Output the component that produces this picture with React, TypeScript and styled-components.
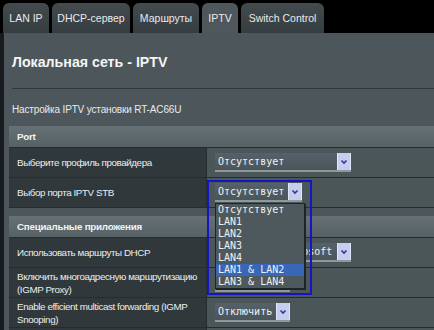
import { FC, ReactNode } from 'react'
import styled, { createGlobalStyle } from 'styled-components'

const GlobalStyle = createGlobalStyle`
  html, body {
    margin: 0;
    padding: 0;
    background: #000;
  }
  body {
    font-family: "Liberation Sans", Arial, sans-serif;
  }
`

const Page = styled.div`
  width: 434px;
  height: 330px;
  overflow: hidden;
  background: #000;
`

const TabBar = styled.div`
  display: flex;
  align-items: flex-end;
  gap: 3px;
  height: 33px;
  padding-left: 3px;
`

const Tab = styled.div<{ $active?: boolean; $w: number }>`
  width: ${(p) => p.$w}px;
  height: 30px;
  box-sizing: border-box;
  display: flex;
  align-items: center;
  justify-content: center;
  border-radius: 6px 6px 0 0;
  background: ${(p) => (p.$active ? '#4e585c' : 'linear-gradient(#434b4e, #363d40)')};
  color: #e8eaeb;
  font-size: 10.5px;
  white-space: nowrap;
`

const Body = styled.div`
  display: flex;
  height: 297px;
`

const EdgeStrip = styled.div`
  width: 4px;
  background: #171b1d;
  flex-shrink: 0;
`

const Panel = styled.div`
  flex: 1;
  background: #4d575b;
  padding: 20px 0 0 5px;
`

const Title = styled.h1`
  margin: 0 0 0 3px;
  height: 18px;
  line-height: 18px;
  font-size: 14.2px;
  font-weight: bold;
  color: #f4f5f5;
`

const Divider = styled.hr`
  margin: 17px 0 0 3px;
  border: none;
  border-top: 1px solid #30383b;
  height: 0;
`

const Subtitle = styled.div`
  margin: 14px 0 0 3px;
  line-height: 14px;
  font-size: 10px;
  letter-spacing: -0.15px;
  color: #e8eaeb;
`

const Table = styled.div<{ $top: number }>`
  margin-top: ${(p) => p.$top}px;
  display: flex;
  flex-direction: column;
`

const HeaderRow = styled.div`
  height: 21px;
  border-bottom: 1px solid #262d30;
  background: linear-gradient(#667175, #566165);
  display: flex;
  align-items: center;
  padding-left: 8px;
  font-size: 9.8px;
  letter-spacing: -0.25px;
  font-weight: bold;
  color: #f2f3f3;
`

const Row = styled.div`
  display: flex;
  height: 29px;
  border-bottom: 1px solid #262d30;
`

const LabelCell = styled.div`
  width: 198px;
  flex-shrink: 0;
  box-sizing: border-box;
  background: #30383b;
  border-right: 1px solid #262d30;
  padding-left: 8px;
  display: flex;
  align-items: center;
  font-size: 9.8px;
  letter-spacing: -0.4px;
  line-height: 13px;
  color: #eceeef;
  white-space: nowrap;
`

const ValueCell = styled.div`
  position: relative;
  flex: 1;
  background: #4b5659;
  display: flex;
  align-items: center;
  padding-left: 8px;
`

const SelectBox = styled.div<{ $w: number }>`
  width: ${(p) => p.$w}px;
  height: 19px;
  box-sizing: border-box;
  display: flex;
  align-items: center;
  background: linear-gradient(#55616a, #4b565a);
  border-bottom: 2px solid #8e999d;
  padding-left: 3px;
  font-family: "DejaVu Sans Mono", "Liberation Mono", monospace;
  font-size: 10px;
  color: #eef1f2;
  white-space: nowrap;
  overflow: hidden;
`

const ArrowBox = styled.div`
  margin-left: auto;
  width: 14px;
  height: 19px;
  flex-shrink: 0;
  box-sizing: border-box;
  background: #c6cef0;
  border: 1px solid #e2e6fa;
  display: flex;
  align-items: center;
  justify-content: center;
`

const SelectText = styled.span`
  overflow: hidden;
`

const FocusRing = styled.div`
  position: absolute;
  left: 0;
  top: 2px;
  width: 105px;
  height: 115px;
  box-sizing: border-box;
  border: 2px solid #1414c8;
  z-index: 2;
  pointer-events: none;
`

const Dropdown = styled.ul`
  position: absolute;
  left: 8px;
  top: 25px;
  width: 88px;
  margin: 0;
  padding: 0;
  list-style: none;
  background: #4e595d;
  border: 1px solid #1f2527;
  box-shadow: 1px 1px 0 #1f2527;
  z-index: 3;
  font-family: "DejaVu Sans Mono", "Liberation Mono", monospace;
  font-size: 10px;
  color: #eef1f2;
`

const Option = styled.li<{ $selected?: boolean }>`
  height: 12px;
  line-height: 12px;
  padding-left: 2px;
  white-space: pre;
  background: ${(p) => (p.$selected ? '#3867b8' : 'transparent')};
`

const Chevron = () => (
  <svg width="8" height="6" viewBox="0 0 8 6">
    <polyline points="1.5,1.5 4,4 6.5,1.5" fill="none" stroke="#2c3b8e" strokeWidth="1.6" />
  </svg>
)

const Select: FC<{ value: string; width: number }> = ({ value, width }) => (
  <SelectBox $w={width}>
    <SelectText>{value}</SelectText>
    <ArrowBox>
      <Chevron />
    </ArrowBox>
  </SelectBox>
)

const Field: FC<{ label: ReactNode; children: ReactNode }> = ({ label, children }) => (
  <Row>
    <LabelCell>
      <span>{label}</span>
    </LabelCell>
    <ValueCell>{children}</ValueCell>
  </Row>
)

const tabs = [
  { label: 'LAN IP', w: 46 },
  { label: 'DHCP-сервер', w: 78 },
  { label: 'Маршруты', w: 66 },
  { label: 'IPTV', w: 36, active: true },
  { label: 'Switch Control', w: 83 },
]

const portOptions = ['Отсутствует', 'LAN1', 'LAN2', 'LAN3', 'LAN4', 'LAN1 & LAN2', 'LAN3 & LAN4']

const App = () => {
  return (
    <Page>
      <GlobalStyle />
      <TabBar>
        {tabs.map((t) => (
          <Tab key={t.label} $w={t.w} $active={t.active}>
            {t.label}
          </Tab>
        ))}
      </TabBar>
      <Body>
        <EdgeStrip />
        <Panel>
          <Title>Локальная сеть - IPTV</Title>
          <Divider />
          <Subtitle>Настройка IPTV установки RT-AC66U</Subtitle>

          <Table $top={9}>
            <HeaderRow>Port</HeaderRow>
            <Field label="Выберите профиль провайдера">
              <Select value="Отсутствует" width={136} />
            </Field>
            <Field label="Выбор порта IPTV STB">
              <Select value="Отсутствует" width={87} />
              <FocusRing />
              <Dropdown>
                {portOptions.map((o) => (
                  <Option key={o} $selected={o === 'LAN1 & LAN2'}>
                    {o}
                  </Option>
                ))}
              </Dropdown>
            </Field>
          </Table>

          <Table $top={8}>
            <HeaderRow>Специальные приложения</HeaderRow>
            <Field label="Использовать маршруты DHCP">
              <Select value="RFC3442 & Microsoft" width={136} />
            </Field>
            <Field
              label={
                <>
                  Включить многоадресную маршрутизацию
                  <br />
                  (IGMP Proxy)
                </>
              }
            >
              <Select value="Отключить" width={75} />
            </Field>
            <Field
              label={
                <>
                  Enable efficient multicast forwarding (IGMP
                  <br />
                  Snooping)
                </>
              }
            >
              <Select value="Отключить" width={75} />
            </Field>
            <Field label="">
              <span />
            </Field>
          </Table>
        </Panel>
      </Body>
    </Page>
  )
}

export default App
